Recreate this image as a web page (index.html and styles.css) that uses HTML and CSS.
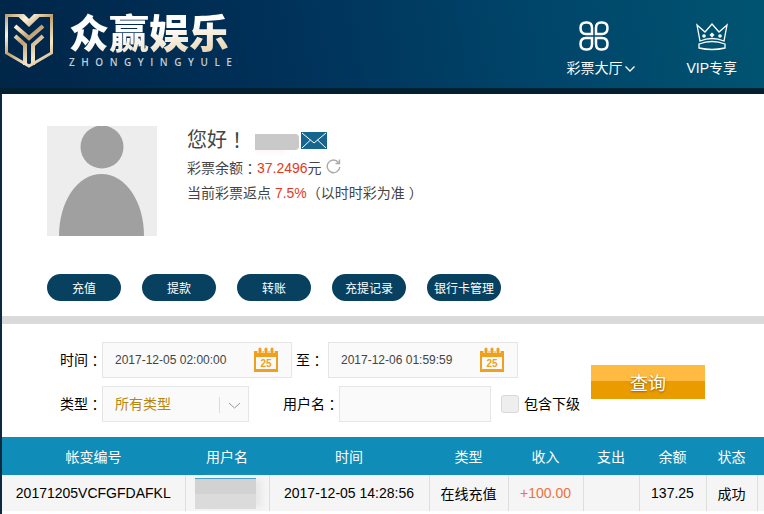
FILE: index.html
```
<!DOCTYPE html>
<html lang="zh-CN">
<head>
    <meta charset="UTF-8">
    <meta name="viewport" content="width=device-width, initial-scale=1.0">
    <title>众赢娱乐</title>
    <link rel="stylesheet" href="styles.css">
</head>
<body>
    <header class="header">
        <div class="logo">
            <svg class="logo-icon" width="50" height="58" viewBox="0 0 50 58" aria-hidden="true">
                <defs>
                    <linearGradient id="gold" gradientUnits="userSpaceOnUse" x1="0" y1="0" x2="50" y2="58">
                        <stop offset="0" stop-color="#a98b60"/>
                        <stop offset="0.25" stop-color="#fff4dc"/>
                        <stop offset="0.45" stop-color="#c0a070"/>
                        <stop offset="0.7" stop-color="#f5e6c8"/>
                        <stop offset="1" stop-color="#b39567"/>
                    </linearGradient>
                </defs>
                <g fill="none" stroke="url(#gold)">
                    <path stroke-width="3" d="M2.500 3.500H15L25 13L35 3.500H47.500V41L25 54L2.500 41Z"/>
                    <path fill="url(#gold)" stroke="none" d="M14 2H36L25 14Z"/>
                    <path fill="#012b52" stroke="none" d="M18 0H32L25 7Z"/>
                    <path stroke-width="4" d="M11 14L25 26L39 14"/>
                    <path stroke-width="4" d="M11 24L21 33V53M39 24L29 33V53"/>
                </g>
            </svg>
            <div class="logo-text">
                <h1>众赢娱乐</h1>
                <p class="logo-sub"><span>Z</span><span>H</span><span>O</span><span>N</span><span>G</span><span>Y</span><span>I</span><span>N</span><span>G</span><span>Y</span><span>U</span><span>L</span><span>E</span></p>
            </div>
        </div>
        <nav class="menu">
            <a href="#">
                <svg width="30" height="30" viewBox="0 0 30 30" fill="none" stroke="#fff" stroke-width="2.500" aria-hidden="true">
                    <path d="M7 1.500H8Q13 1.500 13 7V13H7Q1.500 13 1.500 7Q1.500 1.500 7 1.500Z"/>
                    <path d="M23 1.500H22Q17 1.500 17 7V13H23Q28.500 13 28.500 7Q28.500 1.500 23 1.500Z"/>
                    <path d="M7 28.500H8Q13 28.500 13 23V17H7Q1.500 17 1.500 23Q1.500 28.500 7 28.500Z"/>
                    <path d="M23 28.500H22Q17 28.500 17 23V17H23Q28.500 17 28.500 23Q28.500 28.500 23 28.500Z"/>
                </svg>
                <span>彩票大厅</span>
                <svg class="flecha" width="10" height="6" viewBox="0 0 10 6" fill="none" stroke="#fff" stroke-width="1.300" aria-hidden="true"><path d="M0.500 0.500L5 5L9.500 0.500"/></svg>
            </a>
            <a href="#">
                <svg width="32" height="30" viewBox="0 0 32 30" fill="none" stroke="#fff" stroke-width="1.300" aria-hidden="true">
                    <path d="M4 20L1 4L9 11L16 3L23 11L31 4L28 20Q16 15 4 20Z"/>
                    <path d="M3 23Q16 18 29 23V27Q16 30 3 27Z"/>
                    <g fill="#fff" stroke="none">
                        <path d="M16 11.500L18.500 14L16 16.500L13.500 14Z"/>
                        <circle cx="8" cy="15" r="1.800"/>
                        <circle cx="24" cy="15" r="1.800"/>
                    </g>
                </svg>
                <span>VIP专享</span>
            </a>
        </nav>
    </header>

    <main class="contenido">
        <section class="perfil">
            <div class="perfil-datos">
                <svg class="avatar" width="110" height="110" viewBox="0 0 110 110" aria-hidden="true">
                    <rect width="110" height="110" fill="#ededed"/>
                    <circle cx="55" cy="21" r="21.500" fill="#a0a0a0"/>
                    <path fill="#a0a0a0" d="M12 110C12 76 30 48 54.500 48S97 76 97 110Z"/>
                </svg>
                <div class="info">
                    <p class="saludo">您好<span class="signo">！</span><span class="oculto"></span>
                        <svg width="26" height="17" viewBox="0 0 26 17" aria-hidden="true">
                            <rect width="26" height="17" fill="#15658f"/>
                            <path fill="none" stroke="#fff" d="M1 1L13 11L25 1M1 16L9.500 8M25 16L16.500 8"/>
                        </svg>
                    </p>
                    <p class="saldo">彩票余额<span class="signo">：</span><b>37.2496</b>元
                        <svg width="15" height="15" viewBox="0 0 15 15" fill="none" stroke="#aaa" stroke-width="1.400" aria-hidden="true">
                            <path d="M12.500 3.500A6.300 6.300 0 1 0 13.800 8M13.500 0.500V4.500H9.500"/>
                        </svg>
                    </p>
                    <p class="puntos">当前彩票返点 <b>7.5%</b>（以时时彩为准 ）</p>
                </div>
            </div>
            <div class="acciones">
                <button type="button">充值</button>
                <button type="button">提款</button>
                <button type="button">转账</button>
                <button type="button">充提记录</button>
                <button type="button">银行卡管理</button>
            </div>
        </section>

        <form class="buscador">
            <div class="campos">
                <div class="fila">
                    <label for="desde">时间<span class="signo">：</span></label>
                    <div class="fecha">
                        <input type="text" id="desde" value="2017-12-05 02:00:00">
                        <svg width="26" height="26" viewBox="0 0 26 26" aria-hidden="true">
                            <path fill="#f0a01c" d="M1 4H25V25H1ZM3 10V22H23V10Z" fill-rule="evenodd"/>
                            <path stroke="#fafafa" stroke-width="5" d="M7 0V6M13 0V6M19 0V6"/>
                            <path stroke="#f0a01c" stroke-width="3" stroke-linecap="round" d="M7 2V5M13 2V5M19 2V5"/>
                            <text x="13" y="20" text-anchor="middle" class="dia">25</text>
                        </svg>
                    </div>
                    <label for="hasta" class="hasta">至<span class="signo">：</span></label>
                    <div class="fecha">
                        <input type="text" id="hasta" value="2017-12-06 01:59:59">
                        <svg width="26" height="26" viewBox="0 0 26 26" aria-hidden="true">
                            <path fill="#f0a01c" d="M1 4H25V25H1ZM3 10V22H23V10Z" fill-rule="evenodd"/>
                            <path stroke="#fafafa" stroke-width="5" d="M7 0V6M13 0V6M19 0V6"/>
                            <path stroke="#f0a01c" stroke-width="3" stroke-linecap="round" d="M7 2V5M13 2V5M19 2V5"/>
                            <text x="13" y="20" text-anchor="middle" class="dia">25</text>
                        </svg>
                    </div>
                </div>
                <div class="fila">
                    <label for="tipo">类型<span class="signo">：</span></label>
                    <div class="tipo">
                        <select id="tipo">
                            <option>所有类型</option>
                        </select>
                        <svg width="24" height="16" viewBox="0 0 24 16" fill="none" aria-hidden="true">
                            <path stroke="#ddd" d="M0.500 0V16"/>
                            <path stroke="#999" d="M10 6L15.500 11L21 6"/>
                        </svg>
                    </div>
                    <label for="usuario" class="usuario">用户名<span class="signo">：</span></label>
                    <input type="text" id="usuario">
                    <input type="checkbox" id="inferiores">
                    <label for="inferiores">包含下级</label>
                </div>
            </div>
            <button type="submit" class="buscar">查询</button>
        </form>

        <table class="registros">
            <colgroup>
                <col class="c-numero">
                <col class="c-usuario">
                <col class="c-hora">
                <col class="c-tipo">
                <col class="c-ingreso">
                <col class="c-gasto">
                <col class="c-saldo">
                <col class="c-estado">
                <col>
            </colgroup>
            <thead>
                <tr>
                    <th>帐变编号</th>
                    <th>用户名</th>
                    <th>时间</th>
                    <th>类型</th>
                    <th>收入</th>
                    <th>支出</th>
                    <th>余额</th>
                    <th>状态</th>
                    <th></th>
                </tr>
            </thead>
            <tbody>
                <tr>
                    <td>20171205VCFGFDAFKL</td>
                    <td><span class="tapado"></span></td>
                    <td>2017-12-05 14:28:56</td>
                    <td>在线充值</td>
                    <td class="ingreso">+100.00</td>
                    <td></td>
                    <td>137.25</td>
                    <td>成功</td>
                    <td></td>
                </tr>
            </tbody>
        </table>
    </main>
</body>
</html>
```
FILE: styles.css
```
* {
    box-sizing: border-box;
}
body {
    display: flex;
    flex-direction: column;
    min-height: 100vh;
    margin: 0;
    background-color: #0b2a40;
    font-family: "Liberation Sans", "Noto Sans CJK SC", sans-serif;
    font-size: 14px;
    color: #000;
}
h1, p {
    margin: 0;
}
button, input, select {
    font-family: inherit;
    margin: 0;
}
svg {
    display: block;
    flex: none;
}
/* puntuacion centrada en su caja */
.signo {
    font-family: "Noto Sans CJK JP", sans-serif;
    line-height: 1;
}

/* cabecera */
.header {
    display: flex;
    justify-content: space-between;
    height: 94px;
    padding: 0 27px 0 4px;
    background: linear-gradient(80deg, #002648 0%, #003058 35%, #00456a 70%, #005472 100%);
    border-bottom: 6px solid #02202f;
}
.logo {
    display: flex;
    gap: 15px;
    padding-top: 12px;
}
.logo-text {
    width: 163px;
}
.logo-text h1 {
    font-size: 40px;
    line-height: 44px;
    font-weight: 900;
    color: transparent;
    background: linear-gradient(170deg, #fff 45%, #e2cba0 100%);
    -webkit-background-clip: text;
    background-clip: text;
}
.logo-sub {
    display: flex;
    justify-content: space-between;
    font-family: "Open Sans", sans-serif;
    font-size: 10px;
    line-height: 12px;
    font-weight: 600;
    color: #c3ccd4;
}
.menu {
    display: flex;
    gap: 64px;
    padding-top: 21px;
}
.menu a {
    position: relative;
    display: flex;
    flex-direction: column;
    align-items: center;
    gap: 6px;
    color: #fff;
    line-height: 22px;
    text-decoration: none;
}
/* cuelga a la derecha del texto */
.flecha {
    position: absolute;
    left: 100%;
    top: 45px;
    margin-left: 3px;
}

/* datos del usuario */
.contenido {
    flex: 1;
    margin-left: 2px;
    background-color: #fff;
}
.perfil {
    padding: 32px 45px 15px;
    border-bottom: 8px solid #dadada;
}
.perfil-datos {
    display: flex;
    gap: 30px;
}
.info {
    color: #444;
}
.info p {
    display: flex;
    align-items: center;
    line-height: 28px;
}
.info b {
    font-weight: normal;
    color: #e23a1c;
}
.info .saludo {
    font-size: 20px;
}
.info .puntos {
    line-height: 22px;
    white-space: pre-wrap;
}
.oculto {
    width: 44px;
    height: 16px;
    margin: 4px 2px 0 8px;
    border-radius: 0 4px 4px 0;
    background-color: #c9c9c9;
    box-shadow: -6px 8px 6px -6px #fbeeee;
}
.saldo svg {
    margin: 0 0 4px 4px;
}
.acciones {
    display: flex;
    gap: 21px;
    margin-top: 38px;
}
.acciones button {
    width: 74px;
    height: 27px;
    padding: 0;
    border: none;
    border-radius: 14px;
    background-color: #07415f;
    color: #fff;
    font-size: 12px;
    cursor: pointer;
}

/* buscador */
.buscador {
    display: flex;
    align-items: center;
    gap: 11px;
    padding: 18px 20px 15px 58px;
}
.campos {
    display: flex;
    flex-direction: column;
    gap: 8px;
}
.fila {
    display: flex;
    align-items: center;
    white-space: nowrap;
}
.fila label {
    display: flex;
    align-items: center;
    line-height: 20px;
}
.fila input[type="text"], .fila select {
    height: 36px;
    border: 1px solid #e6e6e6;
    border-radius: 0;
    background-color: #fafafa;
}
.fecha, .tipo {
    position: relative;
}
.fecha input {
    width: 190px;
    padding: 0 44px 0 12px;
    font-size: 12px;
    color: #444;
}
.fecha svg {
    position: absolute;
    top: 5px;
    right: 13px;
}
.dia {
    font-size: 10px;
    font-weight: bold;
    fill: #f0a01c;
}
.hasta {
    margin: 0 4px;
}
.tipo select {
    width: 147px;
    padding: 0 12px;
    appearance: none;
    font-size: 14px;
    color: #b8860b;
}
.tipo svg {
    position: absolute;
    top: 11px;
    right: 6px;
    pointer-events: none;
}
.usuario {
    margin-left: 34px;
}
#usuario {
    width: 152px;
}
#inferiores {
    width: 18px;
    height: 18px;
    margin: 0 5px 0 10px;
    appearance: none;
    border: 1px solid #d8d8d8;
    border-radius: 3px;
    background-color: #eee;
}
.buscar {
    width: 114px;
    height: 34px;
    padding: 0;
    border: none;
    background: linear-gradient(#ffbb41 48%, #e99b00 48%);
    color: #fff;
    font-size: 18px;
    text-shadow: 0 1px 2px #8a5a00;
    cursor: pointer;
}

/* tabla */
.registros {
    width: 100%;
    table-layout: fixed;
    border-collapse: collapse;
    white-space: nowrap;
}
.registros th {
    height: 38px;
    padding: 0;
    background-color: #108cb8;
    color: #fff;
    font-weight: normal;
}
.registros td {
    height: 36px;
    padding: 0;
    border-right: 1px solid #dedede;
    background-color: #f5f5f5;
    text-align: center;
}
.registros td:last-child {
    border-right: none;
}
.registros .ingreso {
    color: #f0713a;
}
.tapado {
    display: block;
    width: 61px;
    height: 31px;
    margin-left: 9px;
    border-top: 1px solid #4c9fc4;
    background: linear-gradient(#d2d2d2 50%, #dbdbdb 50%);
    box-shadow: 8px 0 6px -2px #e8e8e8;
}
.c-numero {
    width: 183px;
}
.c-usuario {
    width: 84px;
}
.c-hora {
    width: 160px;
}
.c-tipo {
    width: 79px;
}
.c-ingreso {
    width: 75px;
}
.c-gasto {
    width: 56px;
}
.c-saldo {
    width: 67px;
}
.c-estado {
    width: 51px;
}
```
